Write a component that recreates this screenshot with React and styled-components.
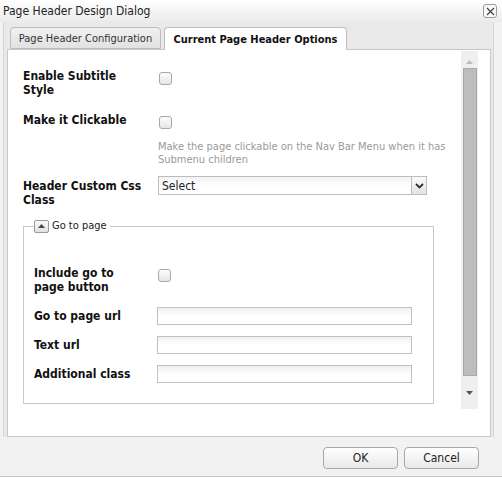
import React from 'react';
import styled, { createGlobalStyle } from 'styled-components';

const GlobalStyle = createGlobalStyle`
  html, body {
    margin: 0;
    padding: 0;
    background: #f2f2f2;
  }
  body {
    font-family: "DejaVu Sans Condensed", "DejaVu Sans", sans-serif;
    font-size: 12px;
  }
`;

const Dialog = styled.div`
  width: 502px;
  height: 477px;
  display: flex;
  flex-direction: column;
  background: #f2f2f2;
  box-sizing: border-box;
  border-bottom: 1px solid #c8c8c8;
`;

const TitleBar = styled.div`
  height: 22px;
  display: flex;
  align-items: center;
  justify-content: space-between;
  padding: 0 5px 0 3px;
  background: linear-gradient(#ffffff, #ebebeb);
  color: #222;
  font-size: 12px;
`;

const CloseButton = styled.div`
  width: 12px;
  height: 12px;
  border: 1px solid #9a9a9a;
  border-radius: 3px;
  background: #fafafa;
  display: flex;
  align-items: center;
  justify-content: center;
`;

const Frame = styled.div`
  margin: 0 8px 0 3px;
  padding: 5px 2px 0 3px;
  border-left: 1px solid #d6d6d6;
  border-right: 1px solid #d6d6d6;
  background: #e9e9e9;
  display: flex;
  flex-direction: column;
`;

const TabStrip = styled.div`
  display: flex;
  gap: 3px;
  padding-left: 3px;
  height: 22px;
`;

const Tab = styled.div`
  width: ${p => p.$w}px;
  box-sizing: border-box;
  height: ${p => (p.$active ? 23 : 22)}px;
  border: 1px solid #bdbdbd;
  border-bottom: ${p => (p.$active ? 'none' : '1px solid #bdbdbd')};
  border-radius: 4px 4px 0 0;
  background: ${p => (p.$active ? '#fff' : 'linear-gradient(#f0f0f0, #e2e2e2)')};
  font-weight: ${p => (p.$active ? 'bold' : 'normal')};
  font-size: 11px;
  color: ${p => (p.$active ? '#111' : '#333')};
  display: flex;
  align-items: center;
  justify-content: center;
  position: relative;
  z-index: 1;
`;

const Panel = styled.div`
  height: 386px;
  background: #fff;
  border: 1px solid #c8c8c8;
  display: flex;
`;

const Content = styled.div`
  flex: 1;
  padding: 19px 0 0 15px;
`;

const Row = styled.div`
  display: grid;
  grid-template-columns: ${p => p.$label}px 1fr;
  align-items: start;
  margin-top: ${p => p.$top || 0}px;
`;

const Label = styled.div`
  font-weight: bold;
  color: #111;
  line-height: 14px;
  padding-top: ${p => p.$pad || 0}px;
`;

const Check = styled.div`
  width: 11px;
  height: 11px;
  border: 1px solid #a8a8a8;
  border-radius: 3px;
  background: linear-gradient(#fdfdfd, #e6e6e6);
  margin: ${p => p.$m || '3px 0 0 1px'};
`;

const Help = styled.div`
  margin: 11px 0 0 135px;
  color: #9a9a9a;
  font-size: 11px;
  line-height: 13px;
  width: 290px;
`;

const Select = styled.div`
  width: 269px;
  height: 19px;
  box-sizing: border-box;
  border: 1px solid #bdbdbd;
  background: linear-gradient(#f4f4f4, #ffffff 60%);
  display: flex;
  align-items: center;
  justify-content: space-between;
  padding-left: 3px;
  color: #222;
`;

const SelectArrow = styled.div`
  width: 16px;
  height: 19px;
  margin-right: -1px;
  box-sizing: border-box;
  border: 1px solid #bdbdbd;
  background: linear-gradient(#fafafa, #e3e3e3);
  display: flex;
  align-items: center;
  justify-content: center;
`;

const Fieldset = styled.fieldset`
  margin: 12px 0 0 0;
  width: 411px;
  box-sizing: border-box;
  height: 185px;
  border: 1px solid #c8c8c8;
  padding: 0 0 0 10px;
`;

const Legend = styled.legend`
  padding: 0 3px 0 0;
  margin-left: 0;
  display: flex;
  align-items: center;
  gap: 3px;
  font-size: 11px;
  color: #222;
  line-height: 14px;
`;

const ToggleButton = styled.span`
  width: 13px;
  height: 11px;
  border: 1px solid #9a9a9a;
  border-radius: 2px;
  background: linear-gradient(#fafafa, #e0e0e0);
  display: flex;
  align-items: center;
  justify-content: center;
`;

const Input = styled.div`
  width: 255px;
  height: 18px;
  box-sizing: border-box;
  border: 1px solid #c0c0c0;
  background: linear-gradient(#eef0f0, #ffffff 50%);
`;

const Scrollbar = styled.div`
  width: 17px;
  margin: 1px 12px 0 0;
  height: 358px;
  background: #efefef;
  display: flex;
  flex-direction: column;
  align-items: center;
`;

const Thumb = styled.div`
  width: 12px;
  height: 306px;
  background: #bdbdbd;
  border: 1px solid #a8a8a8;
`;

const ButtonBar = styled.div`
  flex: 1;
  display: flex;
  justify-content: flex-end;
  gap: 6px;
  padding: 10px 23px 0 0;
`;

const Button = styled.div`
  width: 75px;
  height: 22px;
  box-sizing: border-box;
  border: 1px solid #a8a8a8;
  border-radius: 4px;
  background: linear-gradient(#ffffff, #e9e9e9);
  display: flex;
  align-items: center;
  justify-content: center;
  color: #222;
`;

const Tri = ({ up, color = '#555', w = 8, h = 4 }) => (
  <svg width={w} height={h} viewBox={`0 0 ${w} ${h}`}>
    <polygon
      points={up ? `0,${h} ${w},${h} ${w / 2},0` : `0,0 ${w},0 ${w / 2},${h}`}
      fill={color}
    />
  </svg>
);

export default function App() {
  return (
    <>
      <GlobalStyle />
      <Dialog>
        <TitleBar>
          <span>Page Header Design Dialog</span>
          <CloseButton>
            <svg width="9" height="9" viewBox="0 0 9 9">
              <path d="M1 1 L8 8 M8 1 L1 8" stroke="#444" strokeWidth="1.3" />
            </svg>
          </CloseButton>
        </TitleBar>
        <Frame>
          <TabStrip>
            <Tab $w={151}>Page Header Configuration</Tab>
            <Tab $w={183} $active>Current Page Header Options</Tab>
          </TabStrip>
          <Panel>
            <Content>
              <Row $label={135}>
                <Label>Enable Subtitle<br />Style</Label>
                <Check />
              </Row>
              <Row $label={135} $top={16}>
                <Label>Make it Clickable</Label>
                <Check />
              </Row>
              <Help>
                Make the page clickable on the Nav Bar Menu when it has Submenu children
              </Help>
              <Row $label={135} $top={10}>
                <Label $pad={3}>Header Custom Css<br />Class</Label>
                <Select>
                  <span>Select</span>
                  <SelectArrow>
                    <svg width="9" height="6" viewBox="0 0 9 6">
                      <path d="M1 1 L4.5 4.5 L8 1" stroke="#333" strokeWidth="1.8" fill="none" />
                    </svg>
                  </SelectArrow>
                </Select>
              </Row>
              <Fieldset>
                <Legend>
                  <ToggleButton>
                    <Tri up w={7} h={4} color="#444" />
                  </ToggleButton>
                  Go to page
                </Legend>
                <Row $label={124} $top={33}>
                  <Label>Include go to<br />page button</Label>
                  <Check $m="3px 0 0 0" />
                </Row>
                <Row $label={123} $top={13}>
                  <Label $pad={2}>Go to page url</Label>
                  <Input />
                </Row>
                <Row $label={123} $top={11}>
                  <Label $pad={2}>Text url</Label>
                  <Input />
                </Row>
                <Row $label={123} $top={11}>
                  <Label $pad={2}>Additional class</Label>
                  <Input />
                </Row>
              </Fieldset>
            </Content>
            <Scrollbar>
              <div style={{ height: 13, display: 'flex', alignItems: 'flex-end' }}>
                <Tri up w={7} h={4} color="#bbb" />
              </div>
              <div style={{ height: 4 }} />
              <Thumb />
              <div style={{ flex: 1, display: 'flex', alignItems: 'center' }}>
                <Tri w={7} h={4} color="#555" />
              </div>
            </Scrollbar>
          </Panel>
        </Frame>
        <ButtonBar>
          <Button>OK</Button>
          <Button>Cancel</Button>
        </ButtonBar>
      </Dialog>
    </>
  );
}
